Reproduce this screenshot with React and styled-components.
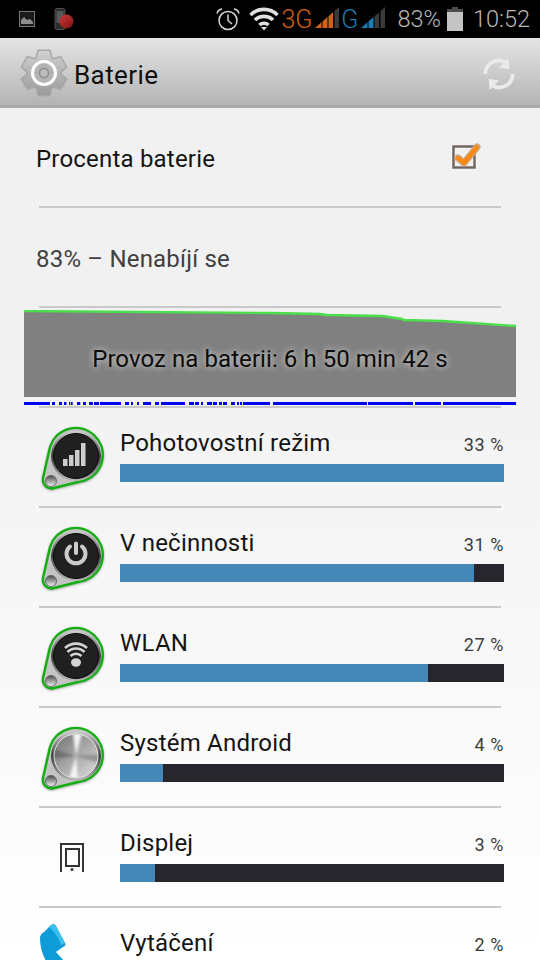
import React, { useId } from 'react'
import styled, { createGlobalStyle } from 'styled-components'

const GlobalStyle = createGlobalStyle`
    html, body {
        margin: 0;
        padding: 0;
        background: #fff;
    }
`;

const Screen = styled.div`
    width: 540px;
    height: 960px;
    overflow: hidden;
    display: flex;
    flex-direction: column;
    font-family: Roboto, "Liberation Sans", sans-serif;
    background: linear-gradient(#f1f1f1 0, #f1f1f1 340px, #ffffff 960px);
`;

const StatusBar = styled.div`
    flex: none;
    height: 38px;
    background: #000;
    display: flex;
    align-items: center;
    padding: 0 10px 0 19px;
    color: #b4b4b4;
`;

const StatusLeft = styled.div`
    display: flex;
    align-items: center;
    gap: 19px;
    flex: 1;
`;

const StatusRight = styled.div`
    display: flex;
    align-items: center;
`;

const StatusSlot = styled.span`
    display: flex;
    margin-left: ${p => p.$left || 0}px;
    margin-bottom: ${p => p.$lift || 0}px;
`;

const NetLabel = styled.span`
    font-size: 25px;
    font-weight: 300;
    color: ${p => p.$color};
    margin-left: ${p => p.$left || 0}px;
`;

const StatusText = styled.span`
    font-size: 23.5px;
    font-weight: 300;
    color: #b8b8b8;
    margin-left: ${p => p.$left || 0}px;
`;

const ActionBar = styled.div`
    flex: none;
    height: 70px;
    box-sizing: border-box;
    border-bottom: 3px solid #a8a8a8;
    background: linear-gradient(#e4e4e4, #b4b4b4);
    display: flex;
    align-items: center;
    padding: 3px 24px 0 20px;
    gap: 6px;
`;

const ActionTitle = styled.div`
    flex: 1;
    font-size: 26px;
    letter-spacing: 0.4px;
    padding-top: 4px;
    color: #101010;
`;

const RefreshSlot = styled.div`
    display: flex;
    padding-top: 2px;
`;

const SimpleRow = styled.div`
    height: 98px;
    flex: none;
    box-sizing: border-box;
    display: flex;
    align-items: center;
    justify-content: space-between;
    padding: 3px 58px 0 36px;
    font-size: 24px;
    letter-spacing: 0.2px;
    color: ${p => p.$muted ? '#404040' : '#141414'};
`;

const CheckSlot = styled.div`
    display: flex;
    margin-bottom: 5px;
`;

const Divider = styled.div`
    flex: none;
    height: 2px;
    margin: 0 39px;
    background: #c9c9c9;
`;

const ChartBlock = styled.div`
    flex: none;
    height: 98px;
    margin: 0 24px;
    padding-top: 2px;
    box-sizing: border-box;
    position: relative;
`;

const ChartLabel = styled.div`
    position: absolute;
    left: 0;
    right: 0;
    top: 37px;
    text-align: center;
    font-size: 24px;
    letter-spacing: 0.07px;
    color: #0c0c0c;
    text-shadow: 0 0 6px #e4e4e4;
`;

const BlockSvg = styled.svg`
    display: block;
`;

const ItemRow = styled.div`
    flex: none;
    height: 98px;
    box-sizing: border-box;
    display: flex;
    padding: 16px 36px 0 40px;
`;

const IconSlot = styled.div`
    flex: none;
    width: 80px;
    height: 68px;
    display: flex;
    align-items: flex-start;
    filter: ${p => p.$shadow ? 'drop-shadow(0 1px 1px rgba(0, 0, 0, 0.3))' : 'none'};
`;

const ItemBody = styled.div`
    flex: 1;
    display: flex;
    flex-direction: column;
`;

const ItemHead = styled.div`
    height: 40px;
    box-sizing: border-box;
    padding-bottom: 2px;
    display: flex;
    justify-content: space-between;
    align-items: center;
`;

const ItemName = styled.span`
    font-size: 24px;
    letter-spacing: 0.22px;
    color: #141414;
`;

const ItemPercent = styled.span`
    font-size: 18px;
    letter-spacing: 0.6px;
    padding-top: 2px;
    color: #3c3c3c;
`;

const Track = styled.div`
    height: 18px;
    background: #26262c;
`;

const Fill = styled.div`
    height: 100%;
    background: #4587b6;
`;

const blueRuns = [
    [24, 50], [52, 55], [59, 62], [64, 66.5], [69, 70], [70.7, 72.7], [77, 80.3], [83, 86],
    [89, 93], [94, 99], [100, 121], [125, 129], [131, 133], [137, 139], [143, 151], [155, 159],
    [161, 185], [189, 194], [195, 199], [201, 203], [207, 212], [213, 217], [219, 222], [223, 227],
    [231, 235], [237, 239], [240, 242], [243, 270], [273, 367], [368, 413], [415, 441], [443, 516],
];

const chartLine = '0,1 246,3 296,4 303,5 359,6 378,9 380,10 419,11 492,16';

function Gear() {
    const points = []
    const teeth = 6
    for (let i = 0; i < teeth; i++) {
        const a = (i * 360) / teeth - 90
        const corners = [[-27, 17], [-15, 23.5], [15, 23.5], [27, 17]]
        corners.forEach(([d, r]) => {
            const t = ((a + d) * Math.PI) / 180
            points.push(`${(24 + r * Math.cos(t)).toFixed(1)},${(24 + r * Math.sin(t)).toFixed(1)}`)
        })
    }
    return (
        <svg width="48" height="48" viewBox="0 0 48 48">
            <defs>
                <linearGradient id="gearFill" x1="0" y1="0" x2="0" y2="1">
                    <stop offset="0" stopColor="#d0d0d0" />
                    <stop offset="1" stopColor="#9a9a9a" />
                </linearGradient>
            </defs>
            <polygon points={points.join(' ')} fill="url(#gearFill)" stroke="#a8a8a8" strokeWidth="1.5" strokeLinejoin="round" />
            <circle cx="24" cy="24" r="11.5" fill="#b4b4b4" stroke="#fff" strokeWidth="3" />
            <circle cx="24" cy="24" r="4.5" fill="#bdbdbd" stroke="#8c8c8c" strokeWidth="1.5" />
        </svg>
    )
}

function Refresh() {
    return (
        <svg width="34" height="36" viewBox="0 0 36 36" fill="none">
            <path d="M3.5 18 A14 14 0 0 1 25 6" stroke="#eaeaea" strokeWidth="4" />
            <path d="M32.5 18 A14 14 0 0 1 11 30" stroke="#eaeaea" strokeWidth="4" />
            <polygon points="28,1 29,13 18,11" fill="#eaeaea" />
            <polygon points="8,35 7,23 18,25" fill="#eaeaea" />
        </svg>
    )
}

function CheckBox() {
    return (
        <svg width="30" height="28" viewBox="0 0 30 28" fill="none">
            <rect x="1.5" y="4.5" width="21" height="21" stroke="#6e645e" strokeWidth="2.4" />
            <path d="M6 16 L12 21 L25 5" stroke="#cfa98a" strokeWidth="7" strokeLinecap="round" strokeLinejoin="round" />
            <path d="M6 16 L12 21 L25 5" stroke="#f58a14" strokeWidth="4.4" strokeLinecap="round" strokeLinejoin="round" />
        </svg>
    )
}

function Signal({ color, lit }) {
    const bars = [[0, 6.5], [7.5, 12.5], [13.5, 18], [19.5, 24]]
    const top = x => (21 * (1 - x / 24)).toFixed(1)
    return (
        <svg width="24" height="21" viewBox="0 0 24 21">
            {bars.map(([a, b], i) => (
                <polygon key={a} points={`${a},${top(a)} ${b},${top(b)} ${b},21 ${a},21`} fill={i < lit ? color : '#3a3a3a'} />
            ))}
        </svg>
    )
}

function Wifi() {
    return (
        <svg width="30" height="24" viewBox="0 0 30 24" fill="none" stroke="#e0e0e0" strokeWidth="3.6">
            <path d="M1.5 8 A19 19 0 0 1 28.5 8" />
            <path d="M6 13 A13 13 0 0 1 24 13" />
            <path d="M10.5 18 A6.5 6.5 0 0 1 19.5 18" />
            <polygon points="12,20 18,20 15,23.5" fill="#e0e0e0" stroke="none" />
        </svg>
    )
}

function Alarm() {
    return (
        <svg width="24" height="24" viewBox="0 0 24 24" fill="none" stroke="#d8d8d8" strokeWidth="1.5">
            <circle cx="12" cy="13.5" r="9" />
            <path d="M12 7.5 V13.5 L16 17" />
            <path d="M1 6.5 A6 6 0 0 1 6 2" />
            <path d="M18 2 A6 6 0 0 1 23 6.5" />
        </svg>
    )
}

function PictureNote() {
    return (
        <svg width="16" height="16" viewBox="0 0 16 16">
            <rect x="0.5" y="0.5" width="15" height="15" fill="#1a1a1a" stroke="#777" />
            <polygon points="2,13 2,9 5,6 8,9 11,8 14,11 14,13" fill="#8c8c8c" />
        </svg>
    )
}

function PhoneNote() {
    return (
        <svg width="20" height="22" viewBox="0 0 20 22">
            <defs>
                <linearGradient id="noteBall" x1="0" y1="0" x2="1" y2="1">
                    <stop offset="0" stopColor="#d23a3a" />
                    <stop offset="1" stopColor="#7c1010" />
                </linearGradient>
            </defs>
            <rect x="1" y="0.5" width="10" height="21" rx="2" fill="#2b2b2b" stroke="#777" strokeWidth="0.6" />
            <rect x="2.5" y="3" width="7" height="12" fill="#55585a" />
            <circle cx="12.5" cy="13.5" r="7" fill="url(#noteBall)" />
        </svg>
    )
}

function Battery() {
    return (
        <svg width="16" height="24" viewBox="0 0 16 24">
            <rect x="5" y="0" width="6" height="3" fill="#4c4c4c" />
            <rect x="0" y="2" width="16" height="22" fill="#c4c4c4" />
            <rect x="0" y="2" width="16" height="3" fill="#4c4c4c" />
        </svg>
    )
}

function Pin({ children }) {
    const id = useId()
    return (
        <svg width="68" height="68" viewBox="0 0 68 68">
            <defs>
                <linearGradient id={`${id}ring`} x1="0" y1="0" x2="0" y2="1">
                    <stop offset="0" stopColor="#cfcfcf" />
                    <stop offset="0.5" stopColor="#3c3c3c" />
                    <stop offset="1" stopColor="#b8b8b8" />
                </linearGradient>
                <linearGradient id={`${id}ball`} x1="0" y1="0" x2="0" y2="1">
                    <stop offset="0" stopColor="#4a4a4a" />
                    <stop offset="1" stopColor="#f4f4f4" />
                </linearGradient>
            </defs>
            <path d="M10 23 L3 54 C2 61 8 66 14 64 L46 56 A27 27 0 1 0 10 23 Z" fill="#c4c4c4" stroke="#12ae12" strokeWidth="2.4" />
            <circle cx="36" cy="32" r="25" fill={`url(#${id}ring)`} />
            <circle cx="11" cy="57" r="5.5" fill={`url(#${id}ball)`} stroke="#555" strokeWidth="0.8" />
            {children}
        </svg>
    )
}

function DarkDisc({ children }) {
    return (
        <g>
            <circle cx="36" cy="32" r="22.5" fill="#202020" stroke="#0a0a0a" strokeWidth="1" />
            {children}
        </g>
    )
}

function SignalPin() {
    return (
        <Pin>
            <DarkDisc>
                <g fill="#cdcdcd">
                    <rect x="23" y="35" width="4.5" height="7" />
                    <rect x="29" y="31" width="4.5" height="11" />
                    <rect x="35" y="26" width="4.5" height="16" />
                    <rect x="41" y="19" width="4.5" height="23" />
                </g>
            </DarkDisc>
        </Pin>
    )
}

function PowerPin() {
    return (
        <Pin>
            <DarkDisc>
                <g fill="none" stroke="#cdcdcd" strokeWidth="4" strokeLinecap="round">
                    <path d="M30 22.5 A9.5 9.5 0 1 0 42 22.5" />
                    <path d="M36 19.5 V29" />
                </g>
            </DarkDisc>
        </Pin>
    )
}

function WifiPin() {
    return (
        <Pin>
            <DarkDisc>
                <g fill="none" stroke="#d4d4d4" strokeWidth="2.6">
                    <path d="M25 24 A16 16 0 0 1 47 24" />
                    <path d="M27.5 28 A12 12 0 0 1 44.5 28" />
                    <path d="M30.5 32 A8 8 0 0 1 41.5 32" />
                </g>
                <ellipse cx="36" cy="38.5" rx="5" ry="4.2" fill="#d4d4d4" />
            </DarkDisc>
        </Pin>
    )
}

function MetalPin() {
    const id = useId()
    return (
        <Pin>
            <defs>
                <linearGradient id={id} x1="0" y1="0" x2="1" y2="1">
                    <stop offset="0" stopColor="#707070" />
                    <stop offset="0.5" stopColor="#a8a8a8" />
                    <stop offset="1" stopColor="#dcdcdc" />
                </linearGradient>
                <clipPath id={`${id}clip`}>
                    <circle cx="36" cy="32" r="21.5" />
                </clipPath>
                <filter id={`${id}soft`}>
                    <feGaussianBlur stdDeviation="1.4" />
                </filter>
            </defs>
            <circle cx="36" cy="32" r="22" fill={`url(#${id})`} stroke="#e8e8e8" strokeWidth="1" />
            <g clipPath={`url(#${id}clip)`}>
                <g filter={`url(#${id}soft)`}>
                    <polygon points="36,32 33,9 42,9" fill="#ffffff" opacity="0.9" />
                    <polygon points="36,32 29,55 38,55" fill="#ffffff" opacity="0.85" />
                    <polygon points="36,32 13,25 13,35" fill="#4c4c4c" opacity="0.5" />
                    <polygon points="36,32 59,30 59,39" fill="#6c6c6c" opacity="0.5" />
                </g>
            </g>
        </Pin>
    )
}

function DisplayIcon() {
    return (
        <svg width="68" height="68" viewBox="0 0 68 68" fill="none" stroke="#333" strokeWidth="2">
            <path d="M21 48 V20 H43 V48" />
            <rect x="26" y="25" width="13" height="17" />
            <circle cx="32" cy="45.5" r="1.5" fill="#333" stroke="none" />
        </svg>
    )
}

function DialIcon() {
    return (
        <svg width="40" height="40" viewBox="0 0 40 40">
            <path d="M0 14 C0 11 2 9 4 8 L11 1 C13 0 15 0 16 2 L25 19 C26 21 25 22 23 23 L16 28 L24 37 L6 37 C2 30 0 22 0 14 Z" fill="#0f9ad8" />
            <path d="M9 3 L11 1 C13 0 15 0 16 2 L25 19 L21 21 C19 14 14 7 9 3 Z" fill="#3cc0ef" />
        </svg>
    )
}

const items = [
    { name: 'Pohotovostní režim', percent: '33 %', width: 100, icon: <SignalPin />, shadow: true },
    { name: 'V nečinnosti', percent: '31 %', width: 92.2, icon: <PowerPin />, shadow: true },
    { name: 'WLAN', percent: '27 %', width: 80.2, icon: <WifiPin />, shadow: true },
    { name: 'Systém Android', percent: '4 %', width: 11.2, icon: <MetalPin />, shadow: true },
    { name: 'Displej', percent: '3 %', width: 9.1, icon: <DisplayIcon /> },
    { name: 'Vytáčení', percent: '2 %', width: 6, icon: <DialIcon /> },
]

export default function App() {
    return (
        <Screen>
            <GlobalStyle />
            <StatusBar>
                <StatusLeft>
                    <PictureNote />
                    <PhoneNote />
                </StatusLeft>
                <StatusRight>
                    <Alarm />
                    <StatusSlot $left={9}><Wifi /></StatusSlot>
                    <NetLabel $color="#d2601a" $left={2}>3G</NetLabel>
                    <StatusSlot $left={3} $lift={3}><Signal color="#d2601a" lit={3} /></StatusSlot>
                    <NetLabel $color="#1a7cb4" $left={2}>G</NetLabel>
                    <StatusSlot $left={3} $lift={3}><Signal color="#1a7cb4" lit={2} /></StatusSlot>
                    <StatusText $left={12}>83%</StatusText>
                    <StatusSlot $left={6}><Battery /></StatusSlot>
                    <StatusText $left={10}>10:52</StatusText>
                </StatusRight>
            </StatusBar>
            <ActionBar>
                <Gear />
                <ActionTitle>Baterie</ActionTitle>
                <RefreshSlot><Refresh /></RefreshSlot>
            </ActionBar>
            <SimpleRow>
                Procenta baterie
                <CheckSlot><CheckBox /></CheckSlot>
            </SimpleRow>
            <Divider />
            <SimpleRow $muted>83% – Nenabíjí se</SimpleRow>
            <Divider />
            <ChartBlock>
                <BlockSvg width="492" height="96" viewBox="0 0 492 96">
                    <polygon points={`${chartLine} 492,87 0,87`} fill="#808080" />
                    <polyline points={chartLine} fill="none" stroke="#4be04b" strokeWidth="2.4" />
                    {blueRuns.map(([from, to]) => (
                        <rect key={from} x={from - 24} y="92" width={to - from} height="3" fill="#0000f5" />
                    ))}
                </BlockSvg>
                <ChartLabel>Provoz na baterii: 6 h 50 min 42 s</ChartLabel>
            </ChartBlock>
            <Divider />
            {items.map(item => (
                <React.Fragment key={item.name}>
                    <ItemRow>
                        <IconSlot $shadow={item.shadow}>{item.icon}</IconSlot>
                        <ItemBody>
                            <ItemHead>
                                <ItemName>{item.name}</ItemName>
                                <ItemPercent>{item.percent}</ItemPercent>
                            </ItemHead>
                            <Track>
                                <Fill style={{ width: `${item.width}%` }} />
                            </Track>
                        </ItemBody>
                    </ItemRow>
                    <Divider />
                </React.Fragment>
            ))}
        </Screen>
    )
}
